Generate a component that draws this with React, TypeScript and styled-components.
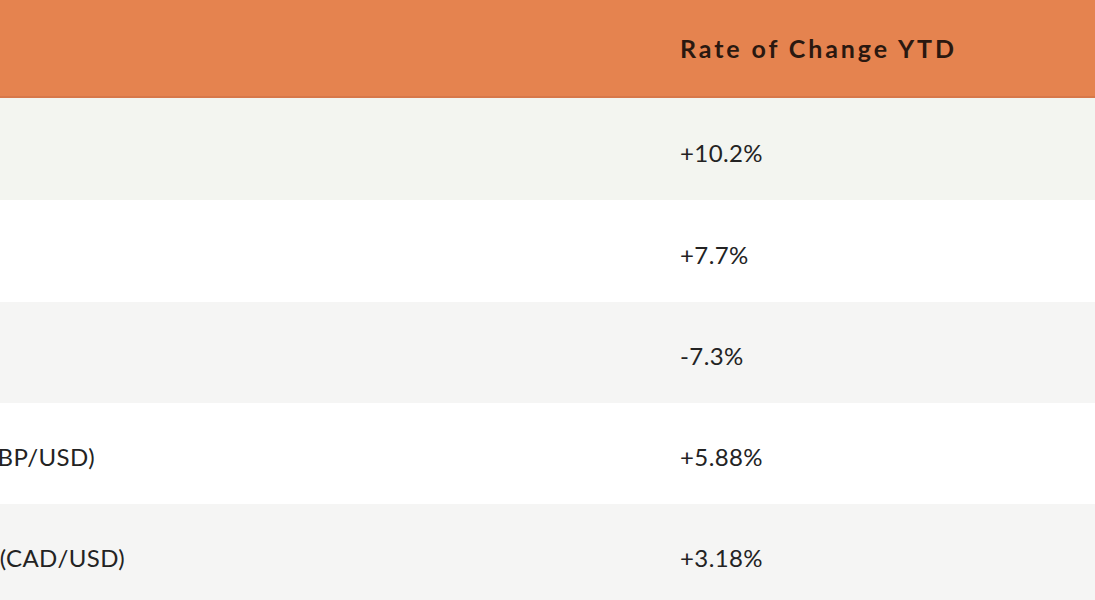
import React from "react";
import styled, { createGlobalStyle } from "styled-components";

const Global = createGlobalStyle`
  html, body { margin: 0; padding: 0; background: #ffffff; overflow: hidden; }
  body { font-family: Lato, "Open Sans", Arial, sans-serif; }
`;

const Viewport = styled.div`
  width: 1095px;
  height: 600px;
  overflow: hidden;
  background: #ffffff;
`;

const Table = styled.div`
  display: grid;
  grid-template-columns: 860px 700px;
  margin-left: -200px;
  width: 1560px;
`;

const Row = styled.div<{ $bg: string; $h: number }>`
  display: contents;
  & > div {
    background: ${(p) => p.$bg};
    height: ${(p) => p.$h}px;
  }
`;

const Cell = styled.div<{ $head?: boolean }>`
  display: flex;
  align-items: center;
  padding-left: 20px;
  padding-top: ${(p) => (p.$head ? "0" : "6px")};
  box-sizing: border-box;
  font-size: ${(p) => (p.$head ? "25px" : "24px")};
  font-weight: ${(p) => (p.$head ? 700 : 400)};
  letter-spacing: ${(p) => (p.$head ? "2.9px" : "0.4px")};
  color: ${(p) => (p.$head ? "#2a1810" : "#232323")};
  white-space: nowrap;
`;

const HeadRow = styled(Row)`
  & > div {
    border-bottom: 2px solid #d7784a;
  }
`;

const rows = [
  { name: "Gold", value: "+10.2%", bg: "#f3f5f0", h: 102 },
  { name: "S&P 500", value: "+7.7%", bg: "#ffffff", h: 102 },
  { name: "Crude Oil", value: "-7.3%", bg: "#f5f5f4", h: 101 },
  { name: "British Pound (GBP/USD)", value: "+5.88%", bg: "#ffffff", h: 101 },
  { name: "Canadian Dollar (CAD/USD)", value: "+3.18%", bg: "#f5f5f4", h: 101 },
];

export default function App() {
  return (
    <>
      <Global />
      <Viewport>
        <Table>
          <HeadRow $bg="#e5834f" $h={98}>
            <Cell $head>Asset</Cell>
            <Cell $head>Rate of Change YTD</Cell>
          </HeadRow>
          {rows.map((r) => (
            <Row key={r.name} $bg={r.bg} $h={r.h}>
              <Cell>{r.name}</Cell>
              <Cell>{r.value}</Cell>
            </Row>
          ))}
        </Table>
      </Viewport>
    </>
  );
}
